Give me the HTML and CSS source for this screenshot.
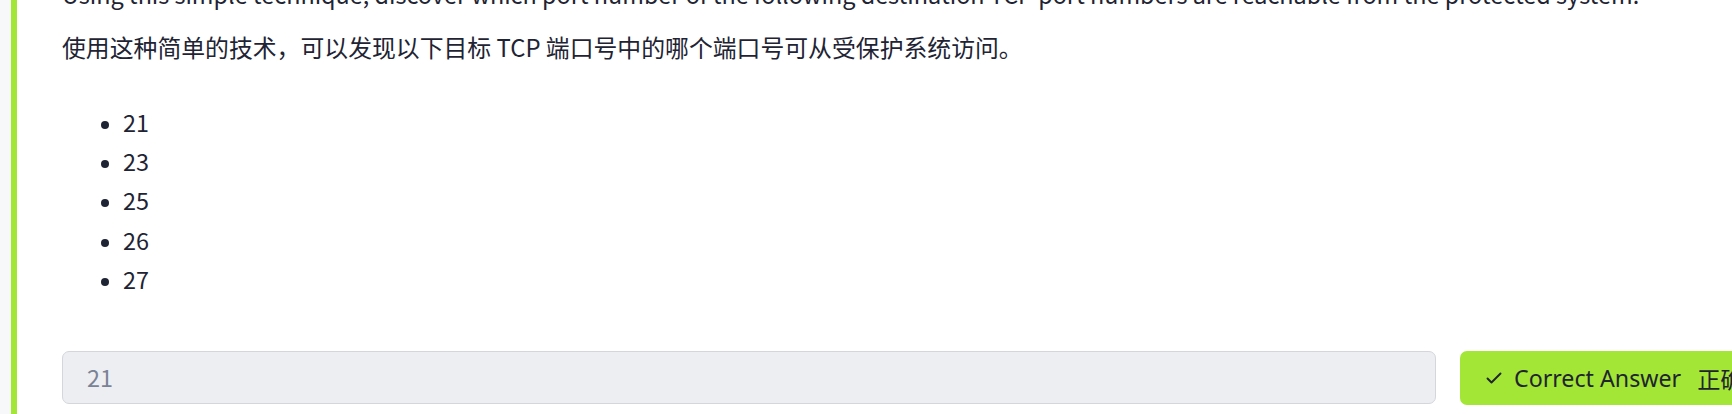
FILE: index.html
```html
<!DOCTYPE html>
<html lang="zh-CN">
<head>
<meta charset="utf-8">
<title>Task</title>
<link rel="stylesheet" href="styles.css">
</head>
<body>
<div class="page">
  <div class="gutter"></div>
  <main class="card">
    <p class="lead">Using this simple technique, discover which port number of the following destination TCP port numbers are reachable from the protected system.</p>
    <p class="zh">使用这种简单的技术，可以发现以下目标 TCP 端口号中的哪个端口号可从受保护系统访问。</p>
    <ul class="options">
      <li>21</li>
      <li>23</li>
      <li>25</li>
      <li>26</li>
      <li>27</li>
    </ul>
    <div class="answer-row">
      <div class="answer-input">21</div>
      <button class="answer-btn" type="button">
        <svg class="check" width="16" height="16" viewBox="0 0 16 16" aria-hidden="true"><polyline points="1.5,8.5 5.5,12.5 14.5,3.5" fill="none" stroke="#1f2430" stroke-width="1.9" stroke-linecap="round" stroke-linejoin="round"/></svg>
        <span class="btn-en">Correct Answer</span>
        <span class="btn-zh">正确答案</span>
      </button>
    </div>
  </main>
</div>
</body>
</html>
```

FILE: styles.css
```css
html, body {
  margin: 0;
  padding: 0;
  background: #ffffff;
}

body {
  overflow: hidden;
}

.page {
  display: flex;
  height: 414px;
  overflow: hidden;
}

.gutter {
  flex: 0 0 11px;
  background: #f7f8fa;
}

.card {
  flex: 0 0 auto;
  width: 1900px;
  border-left: 6px solid #a3e635;
  padding-left: 45px;
  font-family: "Noto Sans CJK SC", "Noto Sans", sans-serif;
  font-size: 23.4px;
  line-height: 39px;
  color: #1e2433;
}

.card p {
  margin: 0 0 13px;
}

.card .lead {
  margin-top: -25px;
}

.card .zh {
  font-size: 23.85px;
}

.options {
  margin: 37px 0 0;
  padding-left: 61px;
  list-style: disc;
}

.options li {
  line-height: 39.2px;
}

.options li::marker {
  font-size: 20px;
}

.answer-row {
  display: flex;
  align-items: flex-start;
  gap: 24px;
  margin-top: 52px;
}

.answer-input {
  flex: 0 0 1374px;
  box-sizing: border-box;
  height: 53px;
  display: flex;
  align-items: center;
  padding-left: 24px;
  background: #edeef2;
  border: 1px solid #d4d6dc;
  border-radius: 7px;
  color: #7a8396;
  font-size: 23.4px;
}

.answer-btn {
  flex: 0 0 auto;
  height: 54px;
  display: flex;
  align-items: center;
  padding: 0 26px;
  border: none;
  border-radius: 7px;
  background: #a3e635;
  color: #1f2430;
  font-family: "Noto Sans", sans-serif;
  font-size: 23.2px;
  cursor: pointer;
}

.check {
  display: block;
  margin-right: 12px;
}

.btn-en {
  white-space: nowrap;
}

.btn-zh {
  margin-left: 16px;
  white-space: nowrap;
  font-family: "Noto Sans CJK SC", sans-serif;
}
```
